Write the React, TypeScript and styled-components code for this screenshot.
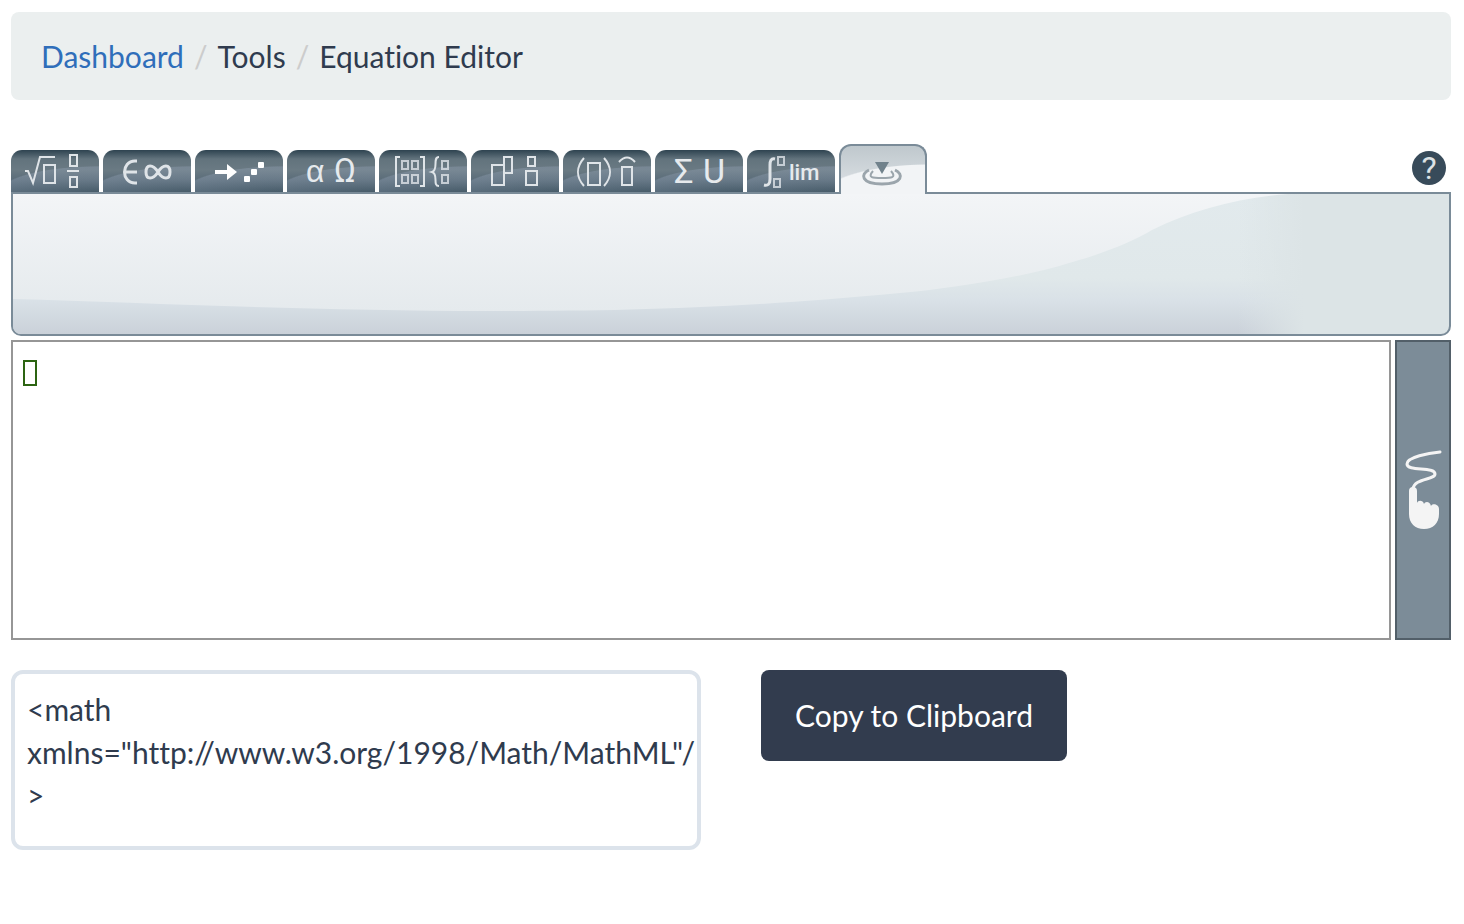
import React, { useRef, useState } from "react";
import styled, { createGlobalStyle, css } from "styled-components";

const GlobalStyle = createGlobalStyle`
  *, *::before, *::after { box-sizing: border-box; }
  body {
    margin: 0;
    background: #fff;
    color: #2f3b4e;
    font-family: Lato, "Liberation Sans", sans-serif;
    font-size: 30px;
    font-variant-ligatures: none;
  }
`;

const Page = styled.main`
  padding: 12px 13px 24px 11px;
`;

const Breadcrumb = styled.nav`
  padding: 22px 30px;
  border-radius: 8px;
  background: #ebefef;
`;

const Crumbs = styled.ol`
  display: flex;
  margin: 0;
  padding: 0;
  list-style: none;
  line-height: 44px;
`;

const Crumb = styled.li`
  & + &::before {
    content: "/";
    padding: 0 10px;
    color: #ccc;
  }
`;

const CrumbLink = styled.a`
  color: #2f6eba;
  text-decoration: none;
`;

const Editor = styled.section`
  margin-top: 44px;
`;

const TabBar = styled.div`
  display: flex;
  align-items: flex-end;
  justify-content: space-between;
  margin-bottom: -2px;
`;

const Tabs = styled.div`
  position: relative;
  z-index: 1;
  display: flex;
  align-items: flex-end;
  gap: 4px;
`;

const Tab = styled.button<{ $active: boolean }>`
  display: block;
  width: 88px;
  padding: 0;
  border: 0;
  cursor: pointer;
  ${({ $active }) =>
    $active
      ? css`
          height: 50px;
          border: 2px solid #7a8b98;
          border-bottom: 0;
          border-radius: 12px 12px 0 0;
          background: radial-gradient(ellipse 110px 34px at 88px 52px, #f2f4f6 97%, transparent 100%),
            linear-gradient(#bfc8cd, #e0e4e8);
        `
      : css`
          height: 42px;
          margin-bottom: 2px;
          border-radius: 11px 11px 0 0;
          background: radial-gradient(ellipse 100px 26px at 88px 42px, rgba(150, 165, 185, 0.12) 0%, rgba(150, 165, 185, 0.35) 97%, transparent 100%),
            linear-gradient(#2e4350 0, #62737d 9px, #6a7a83 20px, #5a6c79 30px, #3c515e 42px);
        `}
`;

const TabIcon = styled.svg`
  display: block;
  overflow: visible;
  fill: none;
  stroke: #dfe4e8;
  stroke-width: 2;

  text {
    fill: #e6eaed;
    stroke: none;
    font-family: Roboto, "Liberation Sans", sans-serif;
  }
`;

const Alpha = styled.text`
  && {
    font-family: "Liberation Sans", sans-serif;
  }
`;

const HelpButton = styled.button`
  width: 34px;
  height: 34px;
  margin: 0 5px 9px 0;
  padding: 0;
  border: 0;
  border-radius: 50%;
  background: #384b5a;
  color: #dde2e5;
  font: 32px/34px Roboto, sans-serif;
  cursor: pointer;
`;

const ToolPanel = styled.div`
  height: 144px;
  overflow: hidden;
  border: 2px solid #7a8b98;
  border-radius: 0 0 10px 10px;
  background: #dce4e6;
`;

const Wave = styled.svg`
  display: block;
  width: 100%;
  height: 100%;
`;

const Workspace = styled.div`
  display: flex;
  gap: 4px;
  height: 300px;
  margin-top: 4px;
`;

const Canvas = styled.div`
  flex: 1;
  padding: 18px 10px;
  border: 2px solid #969696;
  outline: 0;
`;

const EmptySlot = styled.span`
  display: block;
  width: 14px;
  height: 26px;
  border: 2px solid #2c6412;
`;

const HandButton = styled.button`
  display: flex;
  align-items: center;
  justify-content: center;
  width: 56px;
  padding: 0;
  border: 2px solid #525f69;
  background: #7c8c98;
  cursor: pointer;
`;

const HandIcon = styled.svg`
  flex: none;
`;

const Output = styled.section`
  display: grid;
  grid-template-columns: 1fr 1fr;
  align-items: start;
  gap: 60px;
  margin-top: 30px;
`;

const Markup = styled.textarea`
  display: block;
  width: 100%;
  height: 180px;
  padding: 14px 0 14px 12px;
  border: 4px solid #dce3eb;
  border-radius: 12px;
  outline: 0;
  resize: none;
  overflow: hidden;
  background: #fff;
  color: inherit;
  font: inherit;
  font-variant-ligatures: none;
  line-height: 43px;
`;

const CopyButton = styled.button`
  justify-self: start;
  padding: 24px 34px;
  border: 0;
  border-radius: 8px;
  background: #323c4e;
  color: #fff;
  font: inherit;
  line-height: 43px;
  cursor: pointer;
`;

const tabs: { name: string; icon: React.ReactNode }[] = [
  {
    name: "General",
    icon: (
      <>
        <path d="M14 21h3l5 12 7-26h15M33 15h11v18H33zM59 5h7v11h-7zM56 21h12M59 27h7v10h-7z" />
      </>
    ),
  },
  {
    name: "Symbols",
    icon: (
      <>
        <path strokeWidth="3" d="M34 11h-2C18 11 18 33 32 33h2M21 22h13" />
        <path strokeWidth="3" d="M55 22C50 14 43 14 43 22s7 8 12 0 12-8 12 0-7 8-12 0z" />
      </>
    ),
  },
  {
    name: "Arrows",
    icon: (
      <g fill="#fff" stroke="none">
        <path d="M20 20h12v-6l10 8-10 8v-6H20z" />
        <rect x="49" y="26" width="6" height="6" rx="1" />
        <rect x="56" y="19" width="6" height="6" rx="1" />
        <rect x="63" y="12" width="6" height="6" rx="1" />
      </g>
    ),
  },
  {
    name: "Greek letters",
    icon: (
      <>
        <Alpha x="19" y="32" fontSize="32">α</Alpha>
        <text x="47" y="32" fontSize="33">Ω</text>
      </>
    ),
  },
  {
    name: "Matrices",
    icon: (
      <>
        <path d="M21 7h-4v29h4M41 7h4v29h-4" />
        <path opacity=".8" d="M23 11h6v8h-6zM33 11h6v8h-6zM23 25h6v8h-6zM33 25h6v8h-6zM63 11h6v8h-6zM63 25h6v8h-6z" />
        <path d="M60 7c-7 0 0 13-7 15 7 2 0 14 7 14" />
      </>
    ),
  },
  {
    name: "Scripts and layouts",
    icon: <path d="M21 15h12v20H21zM33 7h8v16h-8zM57 7h7v9h-7zM55 21h11v14H55z" />,
  },
  {
    name: "Decorations",
    icon: <path d="M21 8c-8 9-8 19 0 28M25 13h12v22H25zM41 8c8 9 8 19 0 28M59 17h10v18H59zM56 12q8-9 16 0" />,
  },
  {
    name: "Big operators",
    icon: (
      <>
        <text x="19" y="33" fontSize="34">Σ</text>
        <text x="48" y="33" fontSize="34">U</text>
      </>
    ),
  },
  {
    name: "Calculus",
    icon: (
      <>
        <path strokeWidth="3" d="M28 9c-4-1-5 2-5 6v14c0 5-2 7-6 6" />
        <path opacity=".8" d="M31 7h6v8h-6zM27 29h6v8h-6z" />
        <text x="42" y="30" fontSize="22" fontWeight="500">lim</text>
      </>
    ),
  },
  {
    name: "Contextual",
    icon: (
      <g stroke="#9ba5ac" strokeWidth="2">
        <path fill="#71828c" stroke="none" d="M34 13h14l-7 12z" />
        <path strokeWidth="3" d="M28 21c-9 4-8 14 13 14s22-10 13-14" />
        <path d="M32 22c-6 7 0 7 9 7s15 0 9-7" />
      </g>
    ),
  },
];

const markup = '<math xmlns="http://www.w3.org/1998/Math/MathML"/>';

export default function App() {
  const [active, setActive] = useState(tabs.length - 1);
  const output = useRef<HTMLTextAreaElement>(null);

  const copy = () => {
    if (output.current) navigator.clipboard?.writeText(output.current.value);
  };

  return (
    <>
      <GlobalStyle />
      <Page>
        <Breadcrumb aria-label="Breadcrumb">
          <Crumbs>
            <Crumb><CrumbLink href="#dashboard">Dashboard</CrumbLink></Crumb>
            <Crumb>Tools</Crumb>
            <Crumb aria-current="page">Equation Editor</Crumb>
          </Crumbs>
        </Breadcrumb>

        <Editor aria-label="Equation editor">
          <TabBar>
            <Tabs role="tablist">
              {tabs.map((tab, i) => (
                <Tab
                  key={tab.name}
                  type="button"
                  role="tab"
                  aria-label={tab.name}
                  aria-selected={i === active}
                  $active={i === active}
                  onClick={() => setActive(i)}
                >
                  <TabIcon width="88" height="42" viewBox="0 0 88 42" aria-hidden="true">
                    {tab.icon}
                  </TabIcon>
                </Tab>
              ))}
            </Tabs>
            <HelpButton type="button" aria-label="Help">?</HelpButton>
          </TabBar>

          <ToolPanel role="tabpanel">
            <Wave viewBox="0 0 1436 140" preserveAspectRatio="none" aria-hidden="true">
              <defs>
                <linearGradient id="sheen" x1="0" y1="0" x2="0" y2="1">
                  <stop offset="0" stopColor="#f3f5f7" />
                  <stop offset="1" stopColor="#e5eaed" />
                </linearGradient>
                <linearGradient id="base" x1="0" y1="0" x2="0" y2="1">
                  <stop offset="0" stopColor="#e2eaed" />
                  <stop offset=".6" stopColor="#e0e8ea" />
                  <stop offset=".76" stopColor="#d9e1e7" />
                  <stop offset="1" stopColor="#cad1d9" />
                </linearGradient>
                <linearGradient id="edge" x1="0" y1="0" x2="1" y2="0">
                  <stop offset="0" stopColor="#dce4e6" stopOpacity="0" />
                  <stop offset="1" stopColor="#dce4e6" />
                </linearGradient>
              </defs>
              <rect width="1290" height="140" fill="url(#base)" />
              <rect x="1225" width="66" height="140" fill="url(#edge)" />
              <path
                fill="url(#sheen)"
                d="M0 0H1275C1225 4 1180 16 1139 36C1115 50 1085 62 1031 76C980 88 930 95 887 99C720 115 600 117 480 117C300 117 140 109 0 105Z"
              />
            </Wave>
          </ToolPanel>

          <Workspace>
            <Canvas role="textbox" aria-label="Equation" tabIndex={0}>
              <EmptySlot />
            </Canvas>
            <HandButton type="button" aria-label="Handwriting">
              <HandIcon width="52" height="100" viewBox="2 0 52 100" aria-hidden="true">
                <path
                  fill="none"
                  stroke="#f4f4f4"
                  strokeWidth="3"
                  strokeLinecap="round"
                  d="M45 12C34 13 12 17 12 24C12 32 40 26 40 34C40 40 19 38 18 49"
                />
                <path
                  fill="#f4f4f4"
                  d="M14 51q0-4 4-4t4 4v12c1-3 6-3 7 1 1-3 6-3 7 2 1-3 8-2 8 3v5c0 9-6 15-15 15s-15-6-15-15z"
                />
              </HandIcon>
            </HandButton>
          </Workspace>
        </Editor>

        <Output aria-label="MathML output">
          <Markup ref={output} aria-label="MathML" readOnly spellCheck={false} value={markup} />
          <CopyButton type="button" onClick={copy}>Copy to Clipboard</CopyButton>
        </Output>
      </Page>
    </>
  );
}
